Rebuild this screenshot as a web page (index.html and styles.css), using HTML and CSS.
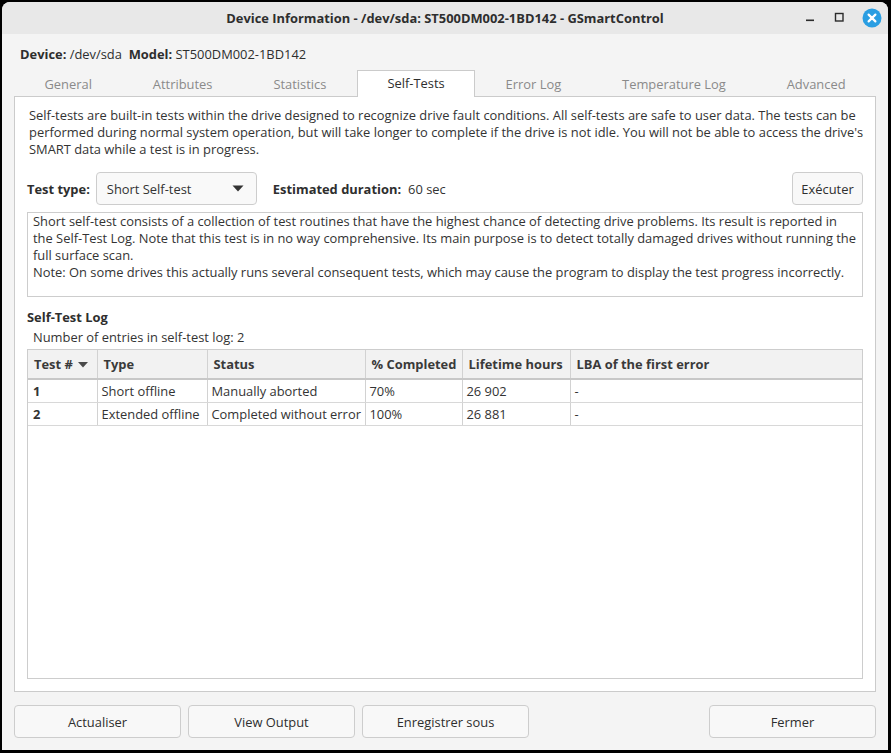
FILE: index.html
```
<!DOCTYPE html>
<html lang="en">
<head>
<meta charset="utf-8">
<title>Device Information - /dev/sda: ST500DM002-1BD142 - GSmartControl</title>
<link rel="stylesheet" href="styles.css">
</head>
<body>
<div class="window">
  <header class="titlebar">
    <div class="tb-spacer"></div>
    <div class="tb-title">Device Information - /dev/sda: ST500DM002-1BD142 - GSmartControl</div>
    <div class="tb-controls">
      <svg class="tb-btn" width="12" height="12" viewBox="0 0 12 12"><rect x="2" y="7.5" width="8" height="1.6" fill="#2b2b2b"/></svg>
      <svg class="tb-btn" width="12" height="12" viewBox="0 0 12 12"><rect x="2.5" y="1.5" width="7.5" height="7.5" fill="none" stroke="#2b2b2b" stroke-width="1.4"/></svg>
      <svg class="tb-close" width="20" height="20" viewBox="0 0 20 20"><circle cx="10" cy="10" r="9.5" fill="#2a9ee2"/><path d="M6.6 6.6 L13.4 13.4 M13.4 6.6 L6.6 13.4" stroke="#fff" stroke-width="2.2" stroke-linecap="round"/></svg>
    </div>
  </header>

  <main class="content">
    <div class="device-line"><b>Device:</b> /dev/sda&nbsp; <b>Model:</b> ST500DM002-1BD142</div>

    <nav class="tabs">
      <div class="tab">General</div>
      <div class="tab">Attributes</div>
      <div class="tab">Statistics</div>
      <div class="tab active">Self-Tests</div>
      <div class="tab">Error Log</div>
      <div class="tab">Temperature Log</div>
      <div class="tab">Advanced</div>
    </nav>

    <section class="panel">
      <p class="intro">Self-tests are built-in tests within the drive designed to recognize drive fault conditions. All self-tests are safe to user data. The tests can be<br>performed during normal system operation, but will take longer to complete if the drive is not idle. You will not be able to access the drive's<br>SMART data while a test is in progress.</p>

      <div class="test-row">
        <span class="label">Test type:</span>
        <div class="combo">
          <span>Short Self-test</span>
          <svg width="12" height="7" viewBox="0 0 12 7"><path d="M0.5 0.5 L11.5 0.5 L6 6.5 Z" fill="#333"/></svg>
        </div>
        <span class="label est">Estimated duration:</span>
        <span class="dur">60 sec</span>
        <button class="btn run">Exécuter</button>
      </div>

      <div class="desc">Short self-test consists of a collection of test routines that have the highest chance of detecting drive problems. Its result is reported in<br>the Self-Test Log. Note that this test is in no way comprehensive. Its main purpose is to detect totally damaged drives without running the<br>full surface scan.<br>Note: On some drives this actually runs several consequent tests, which may cause the program to display the test progress incorrectly.</div>

      <h3 class="log-title">Self-Test Log</h3>
      <div class="log-count">Number of entries in self-test log: 2</div>

      <div class="table-wrap">
        <table class="log">
          <colgroup>
            <col class="c1"><col class="c2"><col class="c3"><col class="c4"><col class="c5"><col>
          </colgroup>
          <thead>
            <tr>
              <th>Test # <svg class="sort" width="10" height="6" viewBox="0 0 10 6"><path d="M0 0 L10 0 L5 5.5 Z" fill="#4a4a4a"/></svg></th>
              <th>Type</th>
              <th>Status</th>
              <th>% Completed</th>
              <th>Lifetime hours</th>
              <th>LBA of the first error</th>
            </tr>
          </thead>
          <tbody>
            <tr><td class="num">1</td><td>Short offline</td><td>Manually aborted</td><td>70%</td><td>26 902</td><td>-</td></tr>
            <tr><td class="num">2</td><td>Extended offline</td><td>Completed without error</td><td>100%</td><td>26 881</td><td>-</td></tr>
          </tbody>
        </table>
      </div>
    </section>

    <footer class="actions">
      <button class="btn act">Actualiser</button>
      <button class="btn act">View Output</button>
      <button class="btn act">Enregistrer sous</button>
      <div class="grow"></div>
      <button class="btn act">Fermer</button>
    </footer>
  </main>
</div>
</body>
</html>
```
FILE: styles.css
```
* { box-sizing: border-box; }
html, body { margin: 0; padding: 0; }
body {
  background: #000;
  width: 891px;
  height: 753px;
  overflow: hidden;
  font-family: "Open Sans", "Noto Sans", sans-serif;
  font-size: 12.9px;
  color: #333;
}
.window {
  margin: 2px 3px 0 2px;
  height: 748px;
  background: #f4f4f4;
  border-radius: 8px 8px 0 0;
  overflow: hidden;
  display: flex;
  flex-direction: column;
}
.titlebar {
  height: 32px;
  flex: none;
  background: #e8e8e8;
  display: grid;
  grid-template-columns: 1fr auto 1fr;
  align-items: center;
}
.tb-title {
  font-weight: bold;
  color: #2e2e2e;
  white-space: nowrap;
}
.tb-controls {
  justify-self: end;
  display: flex;
  align-items: center;
  gap: 17px;
  padding-right: 6px;
}
.tb-btn { display: block; }
.tb-close { display: block; }

.content {
  flex: 1;
  display: flex;
  flex-direction: column;
  padding: 12px;
  min-height: 0;
}
.device-line {
  height: 17px;
  line-height: 17px;
  padding-left: 6px;
  white-space: nowrap;
  color: #2e2e2e;
}
.device-line b { font-weight: bold; }

.tabs {
  margin-top: 7px;
  display: flex;
  height: 26px;
  position: relative;
  z-index: 1;
}
.tab {
  flex: 1 1 auto;
  text-align: center;
  line-height: 26px;
  color: #8a8a8a;
  white-space: nowrap;
  border: 1px solid transparent;
  border-bottom: none;
}
.tab.active {
  color: #2e2e2e;
  background: #fff;
  border-color: #cbcbcb;
  height: 27px;
  line-height: 25px;
}

.panel {
  flex: 1;
  min-height: 0;
  background: #fff;
  border: 1px solid #cbcbcb;
  padding: 10px 12px 12px 12px;
  display: flex;
  flex-direction: column;
}
.intro {
  margin: 0;
  padding-left: 2px;
  line-height: 17px;
  white-space: nowrap;
  color: #333;
}
.test-row {
  margin-top: 14px;
  display: flex;
  align-items: center;
  height: 33px;
}
.label { font-weight: bold; color: #2e2e2e; }
.combo {
  margin-left: 6px;
  width: 161px;
  height: 33px;
  border: 1px solid #cdcdcd;
  border-radius: 4px;
  background: #f9f9f9;
  display: flex;
  align-items: center;
  justify-content: space-between;
  padding: 0 12px 0 10px;
}
.combo svg { display: block; }
.est { margin-left: 16px; }
.dur { margin-left: 7px; }
.btn {
  font: inherit;
  color: #2e2e2e;
  background: #f8f8f8;
  border: 1px solid #cdcdcd;
  border-radius: 4px;
  padding: 0;
}
.run {
  margin-left: auto;
  width: 71px;
  height: 33px;
}
.desc {
  margin-top: 7px;
  height: 85px;
  border: 1px solid #cdcdcd;
  padding: 0 5px;
  line-height: 17px;
  white-space: nowrap;
  color: #333;
}
.log-title {
  margin: 12px 0 0 0;
  font-size: inherit;
  font-weight: bold;
  line-height: 17px;
  color: #2e2e2e;
}
.log-count {
  padding-left: 6px;
  line-height: 17px;
  margin-top: 3px;
}
.table-wrap {
  margin-top: 3px;
  flex: 1;
  min-height: 0;
  border: 1px solid #cdcdcd;
  background: #fff;
}
.log {
  width: 100%;
  border-collapse: collapse;
  table-layout: fixed;
}
.log col.c1 { width: 69px; }
.log col.c2 { width: 110px; }
.log col.c3 { width: 158px; }
.log col.c4 { width: 97px; }
.log col.c5 { width: 108px; }
.log th {
  height: 29px;
  background: #f2f2f2;
  text-align: left;
  font-weight: bold;
  color: #3a3a3a;
  padding: 0 0 0 6px;
  border-left: 1px solid #d2d2d2;
  border-bottom: 2px solid #c8c8c8;
  white-space: nowrap;
}
.log th:first-child, .log td:first-child { border-left: none; }
.log td {
  height: 23px;
  padding: 0 0 0 4px;
  border-left: 1px solid #d2d2d2;
  border-bottom: 1px solid #d8d8d8;
  white-space: nowrap;
  color: #333;
}
.log td.num { font-weight: bold; padding-left: 5px; }
.sort { margin-left: 2px; vertical-align: 1px; }

.actions {
  margin-top: 13px;
  display: flex;
  gap: 7px;
  height: 33px;
  flex: none;
}
.act { width: 167px; height: 33px; }
.grow { flex: 1; }
```
